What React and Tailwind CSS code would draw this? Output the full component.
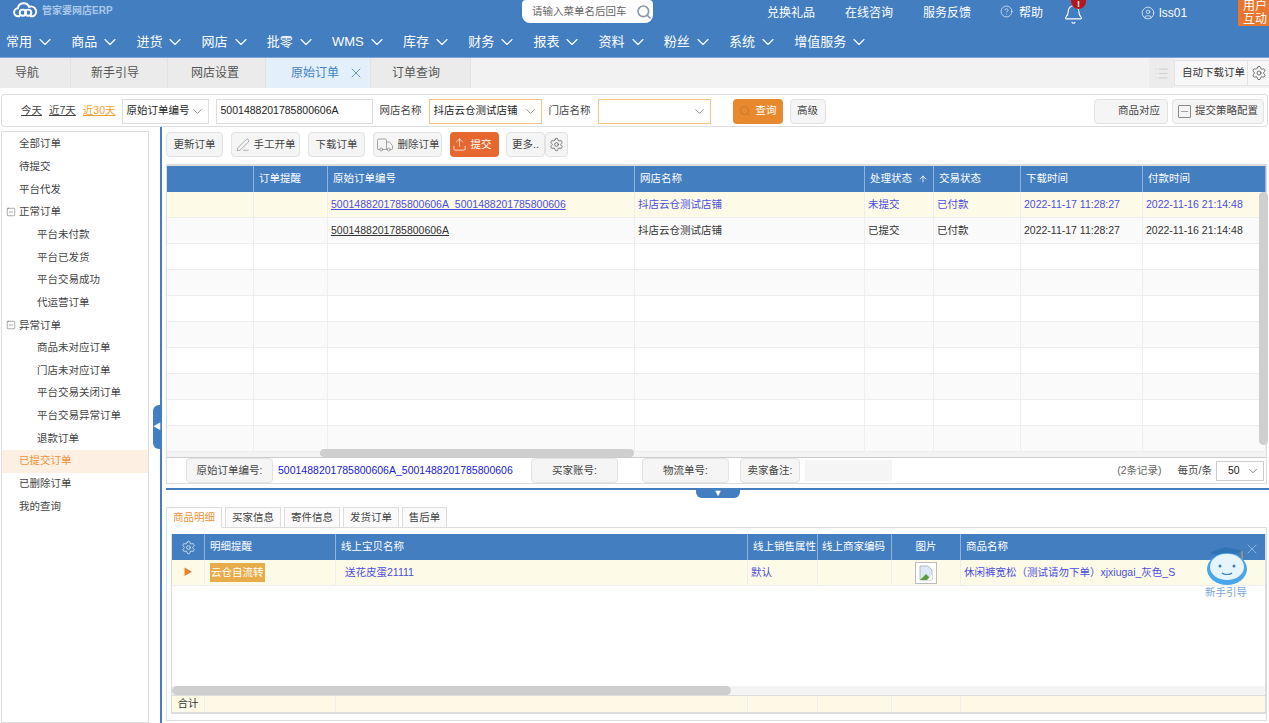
import { ChevronDown, CircleHelp, Bell, CircleUser, X, List, PenLine, Truck, Upload, Settings, Search, SquareMinus, Minus, ArrowUp } from 'lucide-react';

const NAV = ['常用', '商品', '进货', '网店', '批零', 'WMS', '库存', '财务', '报表', '资料', '粉丝', '系统', '增值服务'];
const SIDE = [
  { t: '全部订单', l: 19 }, { t: '待提交', l: 19 }, { t: '平台代发', l: 19 },
  { t: '正常订单', l: 19, tree: true }, { t: '平台未付款', l: 37 }, { t: '平台已发货', l: 37 }, { t: '平台交易成功', l: 37 }, { t: '代运营订单', l: 37 },
  { t: '异常订单', l: 19, tree: true }, { t: '商品未对应订单', l: 37 }, { t: '门店未对应订单', l: 37 }, { t: '平台交易关闭订单', l: 37 }, { t: '平台交易异常订单', l: 37 }, { t: '退款订单', l: 37 },
  { t: '已提交订单', l: 19, active: true }, { t: '已删除订单', l: 19 }, { t: '我的查询', l: 19 },
];
const ORDER_HEAD = ['', '订单提醒', '原始订单编号', '网店名称', '处理状态', '交易状态', '下载时间', '付款时间'];
const ROW_A = ['', '', '5001488201785800606A_5001488201785800606', '抖店云仓测试店铺', '未提交', '已付款', '2022-11-17 11:28:27', '2022-11-16 21:14:48'];
const ROW_B = ['', '', '5001488201785800606A', '抖店云仓测试店铺', '已提交', '已付款', '2022-11-17 11:28:27', '2022-11-16 21:14:48'];
const ORDER_COLS = 'grid-cols-[87px_74px_307px_230px_69px_87px_122px_123px]';
const DETAIL_COLS = 'grid-cols-[33px_131px_412px_70px_74px_69px_305px]';
const FONT = "font-['Liberation_Sans','Noto_Sans_CJK_SC',sans-serif]";

function Btn({ children, className = '' }) {
  return (
    <div className={`h-[25px] flex items-center justify-center gap-1 bg-[#f5f5f5] border border-[#e2e2e2] rounded-sm text-[10.5px] text-[#444] shrink-0 ${className}`}>
      {children}
    </div>
  );
}

function Logo() {
  return (
    <div className="flex items-center ml-[13px] mt-[2px] w-[500px] shrink-0">
      <svg width="25" height="17" viewBox="0 0 28 17" fill="none" stroke="white" strokeWidth="2.2">
        <path d="M8 15H6a4.5 4.5 0 0 1-.5-9 6.5 6.5 0 0 1 12.5-1.5 5.500 5.500 0 0 1 4.500 10.500H19" />
        <circle cx="11" cy="11" r="3.500" />
        <circle cx="17" cy="11" r="3.500" />
      </svg>
      <span className="ml-[4px] text-[10px] text-[#a9c8ea] font-bold">管家婆网店ERP</span>
    </div>
  );
}

function TopBar() {
  return (
    <div className="h-[25px] flex items-start relative text-white text-[12px]">
      <Logo />
      <div className="w-[131px] h-[23px] bg-white rounded-b-lg rounded-t-sm flex items-center pl-[10px] text-[10.5px] text-[#666] shrink-0 ml-[9px]">
        <span className="grow">请输入菜单名后回车</span>
        <Search size={16} strokeWidth={2.5} className="text-[#8a9aa8] mr-[1px]" />
      </div>
      <span className="ml-[114px] mt-[4px]">兑换礼品</span>
      <span className="ml-[30px] mt-[4px]">在线咨询</span>
      <span className="ml-[30px] mt-[4px]">服务反馈</span>
      <CircleHelp size={13} strokeWidth={1.2} className="ml-[29px] mt-[5px]" />
      <span className="ml-[6px] mt-[4px]">帮助</span>
      <Bell size={21} strokeWidth={1.3} className="ml-[20px] mt-[4px]" />
      <span className="ml-[57px] mt-[4px] flex items-center gap-[4px]">
        <CircleUser size={14} strokeWidth={1.2} />
        lss01
      </span>
      <div className="absolute left-[1071px] top-[-7px] w-[15px] h-[16px] rounded-full bg-[#b3191c] text-center text-[9px] pt-[7px] leading-[9px] font-bold">!</div>
      <div className="absolute right-0 top-0 w-[31px] h-[26px] bg-[#e8762e] text-[12px] leading-[13px] pl-[5px] whitespace-nowrap overflow-hidden">用户<br />互动</div>
    </div>
  );
}

function Nav() {
  return (
    <div className="h-[32px] flex items-center pl-[6px] pt-[2px] gap-[16.2px] text-white text-[13px]">
      {NAV.map((n) => (
        <div key={n} className="flex items-center gap-[3px]">
          <span>{n}</span>
          <ChevronDown size={20} strokeWidth={1.3} />
        </div>
      ))}
    </div>
  );
}

function Tabs() {
  const items = [
    { t: '导航', w: 'w-[71px] pl-[15px]' }, { t: '新手引导', w: 'w-[97px] pl-[20px]' }, { t: '网店设置', w: 'w-[98px] pl-[23px]' },
    { t: '原始订单', w: 'w-[105px] pl-[25px]', active: true }, { t: '订单查询', w: 'w-[100px] pl-[21px]' },
  ];
  return (
    <div className="h-[31px] bg-[#f2f2f2] flex text-[12px] text-[#555] border-t border-[#7ea6d6]">
      {items.map((it) =>
        <div key={it.t} className={`${it.w} flex items-center gap-[11px] border-r border-[#e2e2e2] ${it.active ? 'bg-[#e3f0fb] text-[#3f7fc4]' : 'bg-[#ebebeb]'}`}>
          {it.t}
          {it.active && <X size={16} strokeWidth={1.2} className="-ml-[2px]" />}
        </div>
      )}
      <div className="ml-auto flex items-center">
        <div className="w-[25px] h-full flex items-center justify-center bg-[#ececec]"><List size={15} strokeWidth={1} className="text-[#bbb]" /></div>
        <div className="w-[74px] h-[26px] flex items-center justify-end pr-[2px] bg-[#f7f7f7] border border-[#e2e2e2] text-[10.5px] text-[#333]">自动下载订单</div>
        <div className="w-[21px] h-[26px] flex items-center justify-center bg-[#f7f7f7] border-y border-[#e2e2e2]"><Settings size={16} strokeWidth={1.1} className="text-[#444]" /></div>
      </div>
    </div>
  );
}

function Select({ value, w, orange }) {
  return (
    <div className={`${w} h-[25px] bg-white border ${orange ? 'border-[#f3c382]' : 'border-[#ddd]'} flex items-center pl-[4px] pr-[3px] text-[10.5px] text-[#222] shrink-0`}>
      <span className="grow whitespace-nowrap">{value}</span>
      <ChevronDown size={15} strokeWidth={1} className="text-[#555]" />
    </div>
  );
}

function Filter() {
  return (
    <div className="mt-[6px] ml-[1px] mr-[1px] h-[33px] pt-px border border-[#ddd] rounded-[3px] flex items-center text-[10.5px] text-[#444]">
      <span className="ml-[19px] underline">今天</span>
      <span className="ml-[7px] underline">近7天</span>
      <span className="ml-[7px] underline text-[#f0a030]">近30天</span>
      <div className="ml-[6px]"><Select value="原始订单编号" w="w-[87px]" /></div>
      <div className="ml-[7px] w-[157px] h-[25px] border border-[#ddd] flex items-center pl-[4px] text-[#222]">5001488201785800606A</div>
      <span className="ml-[7px] w-[42px]">网店名称</span>
      <div className="ml-[7px]"><Select value="抖店云仓测试店铺" w="w-[113px]" orange /></div>
      <span className="ml-[7px] w-[42px]">门店名称</span>
      <div className="ml-[7px]"><Select value="" w="w-[113px]" orange /></div>
      <div className="ml-[22px] w-[50px] h-[25px] bg-[#e8892f] rounded-sm flex items-center justify-center gap-[5px] text-white">
        <Search size={12} strokeWidth={1.5} className="text-[#b9772f]" />
        查询
      </div>
      <Btn className="ml-[7px] w-[36px]">高级</Btn>
      <Btn className="ml-auto w-[74px] justify-end pr-[7px]">商品对应</Btn>
      <Btn className="ml-[4px] mr-[3px] w-[92px]">
        <Minus size={13} strokeWidth={1} className="border border-[#888] rounded-[1px]" />
        提交策略配置
      </Btn>
    </div>
  );
}

function Sidebar() {
  return (
    <div className="mt-[4px] ml-[1px] w-[148px] border border-[#ddd] text-[10.5px] text-[#444] shrink-0 pt-[1px]">
      {SIDE.map((s) =>
        <div key={s.t} className={`h-[22.65px] flex items-center relative ${s.active ? 'bg-[#fdf0e3] text-[#ee9238]' : ''}`}>
          {s.tree && <SquareMinus size={10} strokeWidth={1} className="absolute left-[4px] text-[#333]" />}
          <span className={s.l === 19 ? 'ml-[17px]' : 'ml-[35px]'}>{s.t}</span>
        </div>
      )}
    </div>
  );
}

function Toolbar() {
  return (
    <div className="flex gap-[8px] h-[25px]">
      <Btn className="w-[57px]">更新订单</Btn>
      <Btn className="w-[69px]"><PenLine size={14} strokeWidth={1} className="text-[#777]" />手工开单</Btn>
      <Btn className="w-[57px]">下载订单</Btn>
      <Btn className="w-[69px] gap-0"><Truck size={18} strokeWidth={1} className="text-[#888]" />删除订单</Btn>
      <div className="w-[49px] h-[25px] bg-[#e6672f] rounded-sm flex items-center justify-center gap-[4px] pr-[6px] text-white text-[10.5px]">
        <Upload size={15} strokeWidth={1.2} />
        提交
      </div>
      <div className="flex -ml-[1px]">
        <Btn className="w-[39px]">更多..</Btn>
        <Btn className="w-[23px]"><Settings size={15} strokeWidth={1.1} /></Btn>
      </div>
    </div>
  );
}

function HeaderRow({ cols, items, h }) {
  return (
    <div className={`grid ${cols} ${h} bg-[#437ec1] text-white text-[10.5px]`}>
      {items.map((c, i) => (
        <div key={i} className="border-r border-[#8fb3dc] flex items-center pl-[5px] whitespace-nowrap">
          {c}
          {c === '处理状态' && <ArrowUp size={10} strokeWidth={2} className="ml-[6px]" />}
        </div>
      ))}
    </div>
  );
}

function OrderRow({ cells, bg, link, blue }) {
  return (
    <div className={`grid ${ORDER_COLS} h-[26px] ${bg} border-b border-[#eee] text-[10.5px] ${blue ? 'text-[#4a4ee0]' : 'text-[#333]'}`}>
      {cells.map((c, i) => (
        <div key={i} className={`border-r border-[#eee] flex items-center pl-[3px] whitespace-nowrap ${i === 2 && link ? 'underline' : ''}`}>{c}</div>
      ))}
    </div>
  );
}

function OrderGrid() {
  const empties = [0, 1, 2, 3, 4, 5, 6, 7];
  return (
    <div className="mt-[7px] w-[1101px] h-[320px] border border-[#ddd] border-t-2 relative">
      <HeaderRow cols={ORDER_COLS} items={ORDER_HEAD} h="h-[26px]" />
      <OrderRow cells={ROW_A} bg="bg-[#fdfae8]" link blue />
      <OrderRow cells={ROW_B} bg="bg-[#fafafa]" link />
      {empties.map((i) => <OrderRow key={i} cells={Array(8).fill('')} bg={i % 2 ? 'bg-[#fafafa]' : 'bg-white'} />)}
      <div className="h-[6px] bg-[#f4f4f4] border-b border-[#ccc]" />
      <div className="h-[25px] flex items-center text-[10.5px] text-[#444] relative">
        <Btn className="ml-[19px] w-[87px] h-[20px]">原始订单编号:</Btn>
        <span className="ml-[5px] w-[234px] text-[#1a1ad6] whitespace-nowrap">5001488201785800606A_5001488201785800606</span>
        <Btn className="ml-[19px] w-[87px] h-[20px]">买家账号:</Btn>
        <Btn className="ml-[24px] w-[87px] h-[20px]">物流单号:</Btn>
        <Btn className="ml-[11px] w-[60px] h-[20px]">卖家备注:</Btn>
        <div className="ml-[5px] w-[87px] h-[21px] bg-[#f5f5f5]" />
        <span className="ml-auto text-[#666]">(2条记录)</span>
        <span className="ml-[16px]">每页/条</span>
        <div className="ml-[4px] mr-[2px] w-[48px] h-[20px] border border-[#ccc] flex items-center justify-between pl-[11px] pr-[3px] text-[#222]">
          50
          <ChevronDown size={14} strokeWidth={1} />
        </div>
      </div>
      {/* scrollbars */}
      <div className="absolute left-[153px] top-[283px] w-[314px] h-[8px] rounded-full bg-[#cfcfcf]" />
      <div className="absolute right-[-2px] top-[26px] w-[9px] h-[253px] rounded-full bg-[#cfcfcf]" />
    </div>
  );
}

function DetailTabs() {
  const tabs = [
    { t: '商品明细', w: 'w-[56px]', active: true }, { t: '买家信息', w: 'w-[56px]' }, { t: '寄件信息', w: 'w-[56px]' },
    { t: '发货订单', w: 'w-[56px]' }, { t: '售后单', w: 'w-[45px]' },
  ];
  return (
    <div className="mt-[17px] flex gap-[3px] h-[21px] text-[10.5px] text-[#444] relative z-10">
      {tabs.map((t) =>
        <div key={t.t} className={`${t.w} flex items-center justify-center border border-[#ddd] ${t.active ? 'bg-white text-[#ee9238] border-b-white' : 'bg-[#fafafa]'}`}>{t.t}</div>
      )}
    </div>
  );
}

function BrokenImage() {
  return (
    <div className="w-[22px] h-[22px] border border-[#bbb] bg-white flex items-center justify-center">
      <svg width="14" height="16" viewBox="0 0 14 16">
        <path d="M1 1h8l4 4v10H1z" fill="#dde8f5" stroke="#aaa" strokeWidth="0.8" />
        <path d="M1 15l6-6 3 3 3-2v5z" fill="#5d9a45" />
        <path d="M8 15l5-6v6z" fill="#fff" />
      </svg>
    </div>
  );
}

function DetailGrid() {
  return (
    <div className="w-[1101px] h-[194px] -mt-px border border-[#ddd] pl-[4px] pt-[6px] relative">
      <div className="w-[1095px] h-[180px] border-x border-b border-[#ddd] relative flex flex-col">
        <div className={`grid ${DETAIL_COLS} h-[26px] bg-[#437ec1] text-white text-[10.5px]`}>
          <div className="border-r border-[#8fb3dc] flex items-center justify-center"><Settings size={15} strokeWidth={1.1} /></div>
          <div className="border-r border-[#8fb3dc] flex items-center pl-[5px]">明细提醒</div>
          <div className="border-r border-[#8fb3dc] flex items-center pl-[5px]">线上宝贝名称</div>
          <div className="border-r border-[#8fb3dc] flex items-center pl-[5px] whitespace-nowrap">线上销售属性</div>
          <div className="border-r border-[#8fb3dc] flex items-center pl-[4px] whitespace-nowrap">线上商家编码</div>
          <div className="border-r border-[#8fb3dc] flex items-center justify-center">图片</div>
          <div className="flex items-center pl-[5px]">商品名称</div>
        </div>
        <div className={`grid ${DETAIL_COLS} h-[26px] bg-[#fdfae8] border-b border-[#eee] text-[10.5px] text-[#4a4ee0]`}>
          <div className="border-r border-[#eee] flex items-center justify-center text-[#e8822e] text-[9px]">▶</div>
          <div className="border-r border-[#eee] flex items-center pl-[5px]"><span className="bg-[#e8ac4a] text-white h-[19px] px-px flex items-center">云仓自流转</span></div>
          <div className="border-r border-[#eee] flex items-center pl-[9px]">送花皮蛋21111</div>
          <div className="border-r border-[#eee] flex items-center pl-[3px]">默认</div>
          <div className="border-r border-[#eee]" />
          <div className="border-r border-[#eee] flex items-center justify-center"><BrokenImage /></div>
          <div className="flex items-center pl-[3px] whitespace-nowrap">休闲裤宽松（测试请勿下单）xjxiugai_灰色_S</div>
        </div>
        <div className="grow" />
        <div className="h-[9px] bg-[#f4f4f4] relative">
          <div className="w-[559px] h-[9px] rounded-full bg-[#cfcfcf]" />
        </div>
        <div className={`grid ${DETAIL_COLS} h-[18px] bg-[#fdf9e6] border-y border-[#ddd] text-[10.5px] text-[#333]`}>
          <div className="border-r border-[#eee] flex items-center justify-center">合计</div>
          <div className="border-r border-[#eee]" />
          <div className="border-r border-[#eee]" />
          <div className="border-r border-[#eee]" />
          <div className="border-r border-[#eee]" />
          <div className="border-r border-[#eee]" />
          <div />
        </div>
      </div>
    </div>
  );
}

function Guide() {
  return (
    <div className="absolute left-[1205px] top-[545px] w-[60px] flex flex-col items-start">
      <X size={16} strokeWidth={1} className="absolute left-[39px] top-[-4px] text-[#b5cde8]" />
      <svg width="44" height="44" viewBox="0 0 44 44">
        <path d="M4 8 L20 2 L38 6 L20 12Z" fill="#2f74b5" />
        <path d="M37 6v14" stroke="#d9a84a" strokeWidth="1" />
        <ellipse cx="22" cy="24" rx="20" ry="16" fill="#4aa5ea" />
        <path d="M12 11c5-3 15-3 20 0l3 3-2 2H11l-2-2z" fill="#bfe0f8" />
        <ellipse cx="22" cy="22" rx="17" ry="13" fill="#e6f4fd" />
        <circle cx="15" cy="21" r="1.500" fill="#3a7cc0" />
        <circle cx="29" cy="21" r="1.500" fill="#3a7cc0" />
        <path d="M17 28c2 2 8 2 10 0" stroke="#3a7cc0" strokeWidth="1.200" fill="none" />
      </svg>
      <span className="text-[10.5px] text-[#7aa6d8] -mt-[4px]">新手引导</span>
    </div>
  );
}

export default function App() {
  return (
    <div className={`w-[1269px] h-[723px] bg-white overflow-hidden relative flex flex-col ${FONT}`}>
      <div className="bg-[#437ec1] h-[57px] shrink-0">
        <TopBar />
        <Nav />
      </div>
      <Tabs />
      <Filter />
      <div className="flex grow min-h-0">
        <Sidebar />
        <div className="ml-[11px] border-l-2 border-[#437ec1] pl-[4px] pt-[5px] grow min-w-0 flex flex-col">
          <Toolbar />
          <OrderGrid />
          <div className="mt-[4px] h-[2px] bg-[#437ec1] w-[1108px]" />
          <DetailTabs />
          <DetailGrid />
        </div>
      </div>
      {/* panel collapse handles */}
      <div className="absolute left-[153px] top-[405px] w-[8px] h-[44px] bg-[#437ec1] rounded-l-md flex items-center justify-center text-white text-[8px]">◀</div>
      <div className="absolute left-[696px] top-[489px] w-[44px] h-[9px] bg-[#437ec1] rounded-b-md flex items-center justify-center text-white text-[9px] leading-none">▼</div>
      <Guide />
    </div>
  );
}
